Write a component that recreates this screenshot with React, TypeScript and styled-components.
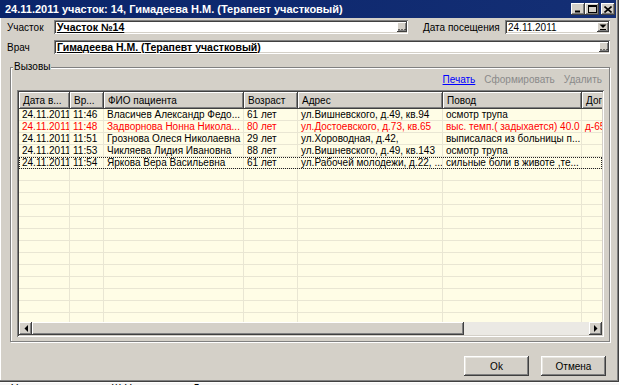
import styled, { createGlobalStyle } from 'styled-components';

const GlobalStyle = createGlobalStyle`
  html, body {
    margin: 0;
    padding: 0;
  }
  body {
    width: 619px;
    height: 385px;
    overflow: hidden;
    background: #ffffff;
    font-family: 'Liberation Sans', Arial, sans-serif;
    font-size: 10px;
    color: #000;
  }
`;

const raised = `
  background: #d4d0c8;
  box-shadow: inset -1px -1px #404040, inset 1px 1px #ffffff, inset -2px -2px #808080;
`;

const sunken = `
  box-shadow: inset 1px 1px #808080, inset -1px -1px #ffffff, inset 2px 2px #404040, inset -2px -2px #d4d0c8;
`;

const Screen = styled.div`
  width: 619px;
  height: 385px;
  display: flex;
  flex-direction: column;
  overflow: hidden;
`;

const Window = styled.div`
  height: 382px;
  flex-shrink: 0;
  box-sizing: border-box;
  display: flex;
  flex-direction: column;
  background: #d4d0c8;
  padding: 0 3px 3px 0;
  box-shadow: inset -1px -1px #404040, inset -2px -2px #808080, inset 1px 0 #ffffff;
  overflow: hidden;
`;

const TitleBar = styled.div`
  height: 18px;
  flex-shrink: 0;
  display: flex;
  align-items: center;
  justify-content: space-between;
  padding: 0 1px 0 5px;
  background: linear-gradient(90deg, #0a246a, #142f75);
`;

const Title = styled.div`
  color: #ffffff;
  font-weight: 700;
  font-size: 11px;
  white-space: nowrap;
`;

const Controls = styled.div`
  display: flex;
  align-items: center;
`;

const WinButton = styled.div<{ $gap?: boolean }>`
  ${raised}
  width: 14px;
  height: 12px;
  margin-left: ${(p) => (p.$gap ? '2px' : '0')};
  display: flex;
  align-items: center;
  justify-content: center;
`;

const Body = styled.div`
  flex: 1;
  display: flex;
  flex-direction: column;
  padding: 2px 6px 0 7px;
`;

const FieldRow = styled.div<{ $top?: number }>`
  display: flex;
  align-items: center;
  height: 14px;
  margin-top: ${(p) => p.$top ?? 0}px;
`;

const Label = styled.div<{ $width: number; $left?: number }>`
  width: ${(p) => p.$width}px;
  margin-left: ${(p) => p.$left ?? 0}px;
  flex-shrink: 0;
  white-space: nowrap;
  color: #000;
`;

const Input = styled.div<{ $width?: number }>`
  ${sunken}
  background: #ffffff;
  box-sizing: border-box;
  height: 14px;
  ${(p) => (p.$width ? `width: ${p.$width}px;` : 'flex: 1;')}
  display: flex;
  align-items: center;
  justify-content: space-between;
  padding: 0 1px 0 3px;
  overflow: hidden;
`;

const InputText = styled.span<{ $bold?: boolean }>`
  font-weight: ${(p) => (p.$bold ? 700 : 400)};
  text-decoration: ${(p) => (p.$bold ? 'underline' : 'none')};
  font-size: ${(p) => (p.$bold ? '10.5px' : '10px')};
  white-space: nowrap;
  line-height: 11px;
`;

const EllipsisButton = styled.div`
  ${raised}
  width: 10px;
  height: 10px;
  flex-shrink: 0;
  display: flex;
  align-items: flex-end;
  justify-content: center;
`;

const DropButton = styled.div`
  ${raised}
  width: 12px;
  height: 10px;
  flex-shrink: 0;
  display: flex;
  align-items: center;
  justify-content: center;
`;

const Group = styled.fieldset`
  margin: 7px 0 0 3px;
  min-width: 0;
  padding: 0 5px 4px 6px;
  border: 1px solid #808080;
  box-shadow: inset 1px 1px #ffffff, 1px 1px #ffffff;
  display: flex;
  flex-direction: column;
`;

const Legend = styled.legend`
  margin-left: -4px;
  padding: 0 1px;
  line-height: 12px;
  background: #d4d0c8;
  color: #000;
`;

const Links = styled.div`
  display: flex;
  justify-content: flex-end;
  gap: 9px;
  height: 12px;
  line-height: 12px;
  margin-top: 1px;
  padding-right: 2px;
`;

const LinkItem = styled.span<{ $active?: boolean }>`
  color: ${(p) => (p.$active ? '#0000ff' : '#8a8a8a')};
  text-decoration: ${(p) => (p.$active ? 'underline' : 'none')};
  white-space: nowrap;
`;

const Grid = styled.div`
  ${sunken}
  margin-top: 4px;
  height: 247px;
  box-sizing: border-box;
  padding: 2px;
  background: #fffde6;
  display: flex;
  flex-direction: column;
  overflow: hidden;
`;

const HeaderRow = styled.div`
  display: flex;
  height: 17px;
  flex-shrink: 0;
  overflow: hidden;
`;

const HeaderCell = styled.div<{ $width: number }>`
  ${raised}
  width: ${(p) => p.$width}px;
  flex-shrink: 0;
  box-sizing: border-box;
  padding-left: 4px;
  line-height: 17px;
  white-space: nowrap;
  overflow: hidden;
`;

const Rows = styled.div`
  flex: 1;
  overflow: hidden;
`;

const Row = styled.div<{ $red?: boolean; $focused?: boolean }>`
  display: flex;
  height: 12px;
  color: ${(p) => (p.$red ? '#ff0000' : '#000000')};
  outline: ${(p) => (p.$focused ? '1px dotted #222' : 'none')};
  outline-offset: -1px;
`;

const Cell = styled.div<{ $width: number }>`
  width: ${(p) => p.$width}px;
  flex-shrink: 0;
  box-sizing: border-box;
  border-right: 1px solid #e9e6d3;
  border-bottom: 1px solid #e9e6d3;
  padding-left: 3px;
  line-height: 11px;
  white-space: nowrap;
  overflow: hidden;
`;

const ScrollBar = styled.div`
  height: 13px;
  flex-shrink: 0;
  display: flex;
`;

const ScrollArrow = styled.div`
  ${raised}
  width: 13px;
  flex-shrink: 0;
  display: flex;
  align-items: center;
  justify-content: center;
`;

const ScrollThumb = styled.div`
  ${raised}
  width: 432px;
  flex-shrink: 0;
`;

const ScrollTrack = styled.div`
  flex: 1;
  background: #ebe9e4;
`;

const Footer = styled.div`
  display: flex;
  justify-content: flex-end;
  gap: 12px;
  margin-top: 14px;
  padding-right: 4px;
`;

const DialogButton = styled.div`
  ${raised}
  box-shadow: inset -1px -1px #404040, inset 1px 1px #ffffff, inset -2px -2px #808080, inset 2px 2px #e8e6e0;
  width: 65px;
  height: 20px;
  display: flex;
  align-items: center;
  justify-content: center;
  font-size: 10px;
`;

const Behind = styled.div`
  flex: 1;
  background: #f6f6f6;
  overflow: hidden;
  display: flex;
  gap: 60px;
  padding-left: 11px;
  font-size: 11px;
  line-height: 11px;
  margin-top: 1px;
`;

const columns = [51, 34, 140, 54, 145, 139, 80];
const headers = ['Дата в...', 'Вр...', 'ФИО пациента', 'Возраст', 'Адрес', 'Повод', 'Договор'];

type Call = {
  cells: string[];
  red?: boolean;
};

const calls: Call[] = [
  { cells: ['24.11.2011', '11:46', 'Власичев Александр Федо...', '61 лет', 'ул.Вишневского, д.49, кв.94', 'осмотр трупа', ''] },
  {
    cells: ['24.11.2011', '11:48', 'Задворнова Нонна Никола...', '80 лет', 'ул.Достоевского, д.73, кв.65', 'выс. темп.( задыхается) 40.0', 'д-65'],
    red: true,
  },
  { cells: ['24.11.2011', '11:51', 'Грознова Олеся Николаевна', '29 лет', 'ул.Хороводная, д.42,', 'выписалася из больницы п...', ''] },
  { cells: ['24.11.2011', '11:53', 'Чикляева Лидия Ивановна', '88 лет', 'ул.Вишневского, д.49, кв.143', 'осмотр трупа', ''] },
  { cells: ['24.11.2011', '11:54', 'Яркова Вера Васильевна', '61 лет', 'ул.Рабочей молодежи, д.22, ...', 'сильные боли в животе ,те...', ''] },
];

const emptyRows = Array.from({ length: 14 }, () => columns.map(() => ''));

function Dots() {
  return (
    <svg width="8" height="4" viewBox="0 0 8 4">
      <rect x="0.5" y="1" width="1" height="1" fill="#000" />
      <rect x="3.5" y="1" width="1" height="1" fill="#000" />
      <rect x="6.5" y="1" width="1" height="1" fill="#000" />
    </svg>
  );
}

function DownArrow() {
  return (
    <svg width="8" height="6" viewBox="0 0 8 6">
      <polygon points="0.5,0.5 7.5,0.5 4,4" fill="#000" />
      <rect x="1" y="5" width="6" height="1" fill="#000" />
    </svg>
  );
}

export default function App() {
  return (
    <Screen>
      <GlobalStyle />
      <Window>
        <TitleBar>
          <Title>24.11.2011 участок: 14, Гимадеева Н.М. (Терапевт участковый)</Title>
          <Controls>
            <WinButton>
              <svg width="8" height="8" viewBox="0 0 8 8">
                <rect x="1" y="5.5" width="5" height="2" fill="#000" />
              </svg>
            </WinButton>
            <WinButton>
              <svg width="9" height="8" viewBox="0 0 9 8">
                <rect x="0.5" y="0.5" width="8" height="7" fill="none" stroke="#000" />
                <rect x="0" y="0" width="9" height="2" fill="#000" />
              </svg>
            </WinButton>
            <WinButton $gap>
              <svg width="8" height="7" viewBox="0 0 8 7">
                <path d="M0.5 0.5 L7.5 6.5 M7.5 0.5 L0.5 6.5" stroke="#000" strokeWidth="1.6" />
              </svg>
            </WinButton>
          </Controls>
        </TitleBar>
        <Body>
          <FieldRow $top={0}>
            <Label $width={47}>Участок</Label>
            <Input $width={354}>
              <InputText $bold>Участок №14</InputText>
              <EllipsisButton>
                <Dots />
              </EllipsisButton>
            </Input>
            <Label $width={82} $left={15}>
              Дата посещения
            </Label>
            <Input $width={105}>
              <InputText>24.11.2011</InputText>
              <DropButton>
                <DownArrow />
              </DropButton>
            </Input>
          </FieldRow>
          <FieldRow $top={6}>
            <Label $width={47}>Врач</Label>
            <Input>
              <InputText $bold>Гимадеева Н.М. (Терапевт участковый)</InputText>
              <EllipsisButton>
                <Dots />
              </EllipsisButton>
            </Input>
          </FieldRow>
          <Group>
            <Legend>Вызовы</Legend>
            <Links>
              <LinkItem $active>Печать</LinkItem>
              <LinkItem>Сформировать</LinkItem>
              <LinkItem>Удалить</LinkItem>
            </Links>
            <Grid>
              <HeaderRow>
                {headers.map((h, i) => (
                  <HeaderCell key={h} $width={columns[i]}>
                    {h}
                  </HeaderCell>
                ))}
              </HeaderRow>
              <Rows>
                {calls.map((call, r) => (
                  <Row key={r} $red={call.red} $focused={r === calls.length - 1}>
                    {call.cells.map((c, i) => (
                      <Cell key={i} $width={columns[i]}>
                        {c}
                      </Cell>
                    ))}
                  </Row>
                ))}
                {emptyRows.map((cells, r) => (
                  <Row key={`e${r}`}>
                    {cells.map((c, i) => (
                      <Cell key={i} $width={columns[i]}>
                        {c}
                      </Cell>
                    ))}
                  </Row>
                ))}
              </Rows>
              <ScrollBar>
                <ScrollArrow>
                  <svg width="4" height="7" viewBox="0 0 4 7">
                    <polygon points="4,0 4,7 0.5,3.5" fill="#000" />
                  </svg>
                </ScrollArrow>
                <ScrollThumb />
                <ScrollTrack />
                <ScrollArrow>
                  <svg width="4" height="7" viewBox="0 0 4 7">
                    <polygon points="0,0 0,7 3.5,3.5" fill="#000" />
                  </svg>
                </ScrollArrow>
              </ScrollBar>
            </Grid>
          </Group>
          <Footer>
            <DialogButton>Ok</DialogButton>
            <DialogButton>Отмена</DialogButton>
          </Footer>
        </Body>
      </Window>
      <Behind>
        <span>Участок</span>
        <span>Ш Н</span>
        <span>Д</span>
      </Behind>
    </Screen>
  );
}
